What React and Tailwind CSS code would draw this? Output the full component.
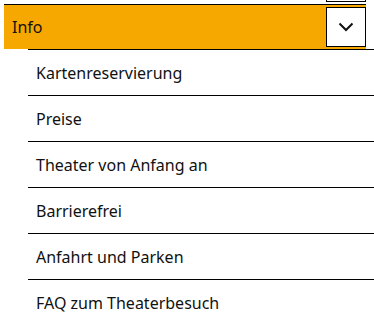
const items = [
  "Kartenreservierung",
  "Preise",
  "Theater von Anfang an",
  "Barrierefrei",
  "Anfahrt und Parken",
  "FAQ zum Theaterbesuch",
];

export default function App() {
  return (
    <div className="w-[374px] h-[320px] overflow-hidden bg-white font-['Noto_Sans','Open_Sans',sans-serif] text-[#111]">
      <div className="ml-[4px] w-[362px]">
        {/* bottom of previous row */}
        <div className="h-[4px] flex justify-end">
          <div className="w-[40px] h-[2px] border-x border-b border-black" />
        </div>

        {/* open section header */}
        <div className="h-[45px] border-t border-black bg-[#f7a800] flex items-center justify-between pl-[8px]">
          <span className="text-[16px] leading-none">Info</span>
          <button className="w-[40px] h-[40px] bg-white border border-black flex items-center justify-center">
            <svg width="16" height="10" viewBox="0 0 16 10" fill="none">
              <path d="M1.5 1.5 L8 8 L14.5 1.5" stroke="#111" strokeWidth="2" />
            </svg>
          </button>
        </div>
      </div>

      <ul className="ml-[28px]">
        {items.map((t) => (
          <li
            key={t}
            className="h-[46px] border-t border-black flex items-center pl-[8px] text-[16px]"
          >
            {t}
          </li>
        ))}
      </ul>
    </div>
  );
}
